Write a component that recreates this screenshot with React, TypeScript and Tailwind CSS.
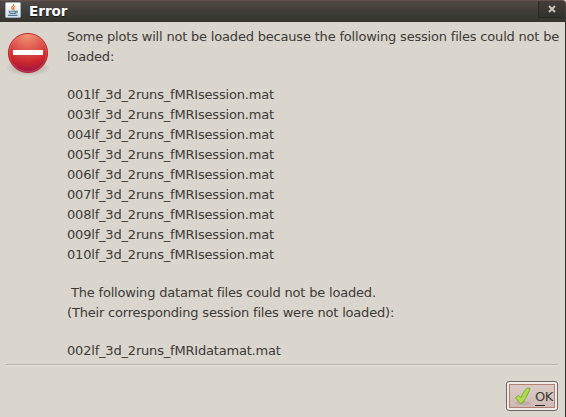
import type { ReactNode } from "react";

const sessionFiles = ["001", "003", "004", "005", "006", "007", "008", "009", "010"];

function Line({ children }: { children: ReactNode }) {
  return <p className="h-5 leading-[19px] tracking-[-0.19px] whitespace-pre">{children}</p>;
}

function Gap() {
  return <div className="h-[18px]" />;
}

function JavaIcon() {
  return (
    <svg width="16" height="16" viewBox="0 0 16 16" fill="none">
      <defs>
        <linearGradient id="java" x2="0" y2="1">
          <stop stopColor="#fff" />
          <stop offset="1" stopColor="#d3dde3" />
        </linearGradient>
      </defs>
      <rect x=".5" y=".5" width="15" height="15" rx="1" fill="url(#java)" stroke="#9bb0bf" />
      <path d="M8.6 2c1 1.8-2.8 2.4-1.8 4.2.3.7.8 1 1.1 1.6M10.3 4.2C8 5.3 8 6 9 7c.3.4 0 .8-.5 1.2" stroke="#e8792b" strokeWidth="1.2" />
      <path d="M4.2 9.2h6.3l-.6 2.2H5.2ZM3 13.4h9.5M10.7 9.3c2.6-.8 2.2 1.8-.6 2" stroke="#527b96" strokeWidth="1.1" />
    </svg>
  );
}

function StopIcon() {
  return (
    <svg width="48" height="48" viewBox="0 0 48 48">
      <defs>
        <radialGradient id="stop" cx=".48" cy="0" r="1.05">
          <stop stopColor="#f39a78" />
          <stop offset=".45" stopColor="#dc514b" />
          <stop offset=".72" stopColor="#c9252c" />
          <stop offset="1" stopColor="#8f1250" />
        </radialGradient>
        <radialGradient id="shade">
          <stop stopColor="#555" stopOpacity=".45" />
          <stop offset="1" stopColor="#555" stopOpacity="0" />
        </radialGradient>
      </defs>
      <ellipse cx="24" cy="38" rx="23" ry="8" fill="url(#shade)" />
      <circle cx="24" cy="23" r="19.6" fill="url(#stop)" stroke="#b81f27" strokeWidth=".9" />
      <circle cx="24" cy="23" r="18.5" fill="none" stroke="#f37c6b" strokeOpacity=".35" />
      <rect x="9" y="20" width="30" height="5" fill="#fff" />
    </svg>
  );
}

function CheckIcon() {
  return (
    <svg width="18" height="20" viewBox="0 0 18 20" className="shrink-0">
      <defs>
        <linearGradient id="check" x1="1" x2="0" y2="1">
          <stop stopColor="#a9dc4c" />
          <stop offset="1" stopColor="#b4e04a" />
        </linearGradient>
      </defs>
      <ellipse cx="9" cy="17" rx="8" ry="2" fill="#766" opacity=".2" />
      <path d="M1.4 11.8 4.6 9.4 7 11.8C8.4 8 10.6 4 13.2 2.2l2.9.2C14.9 6.8 11.8 11 9.4 16.2L6.6 17.4Z" fill="url(#check)" stroke="#7fa83a" strokeWidth="1" strokeLinejoin="round" />
    </svg>
  );
}

export default function App() {
  return (
    <div className="flex h-[417px] w-[566px] flex-col overflow-hidden bg-[#dad5cd] font-['DejaVu_Sans',sans-serif] text-[13px] text-[#3c3b37]">
      <header className="flex h-[22px] shrink-0 items-start justify-between rounded-tr-[4px] border-t border-[#65514b] bg-linear-to-b from-[#504844] via-[#403e39] to-[#35342f] pl-[5px]">
        <div className="flex items-start gap-2 pt-px">
          <JavaIcon />
          <h1 className="text-[13.5px] leading-[18px] font-bold text-white [text-shadow:0_1px_1px_#171513]">Error</h1>
        </div>
        <button aria-label="Close" className="mr-px flex h-[17px] w-[27px] items-center justify-center rounded-b-[2px] border-b border-l border-[#282722] bg-linear-to-b from-[#443c38] to-[#33322e]">
          <svg width="8" height="8" viewBox="0 0 8 8" stroke="#c9c6be" strokeWidth="1.9">
            <path d="m1 1 6 6M7 1 1 7" />
          </svg>
        </button>
      </header>
      <main className="flex flex-1 flex-col border-r border-[#35342f]">
        <div className="flex h-[342px] pt-[5px] pl-1">
          <div className="w-[63px] shrink-0 pt-[3px]">
            <StopIcon />
          </div>
          <div>
            <Line>Some plots will not be loaded because the following session files could not be</Line>
            <Line>loaded:</Line>
            <Gap />
            {sessionFiles.map((id) => (
              <Line key={id}>{id}lf_3d_2runs_fMRIsession.mat</Line>
            ))}
            <Gap />
            <Line> The following datamat files could not be loaded.</Line>
            <Line>(Their corresponding session files were not loaded):</Line>
            <Gap />
            <Line>002lf_3d_2runs_fMRIdatamat.mat</Line>
          </div>
        </div>
        <div className="mr-[7px] ml-1.5 h-0.5 border-t border-b border-t-[#b9b3a6] border-b-[#e5e0d8]" />
        <div className="flex justify-end pt-[15px] pr-[7px]">
          <button className="h-[30px] w-[52px] rounded-[3px] border border-[#6f6862] bg-[#f1ebe7] p-[2px]">
            <span className="flex h-full items-center gap-[3px] border border-[#b17f73] bg-linear-to-b from-[#dccbc5] to-[#cfbbb5] pl-1">
              <CheckIcon />
              <span className="flex pt-0.5 text-[13px] leading-[18px] tracking-[-0.6px]">
                <span className="h-[18px] border-b border-[#292823]">O</span>
                <span>K</span>
              </span>
            </span>
          </button>
        </div>
      </main>
    </div>
  );
}
